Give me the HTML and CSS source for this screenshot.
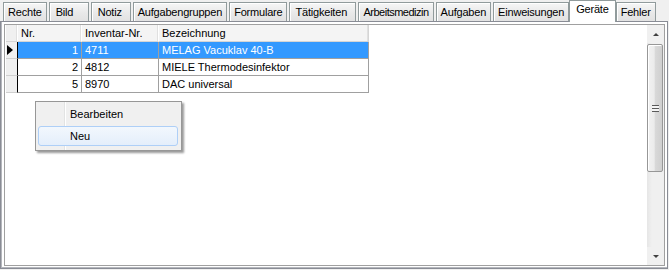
FILE: index.html
```html
<!doctype html>
<html lang="de">

<head>
  <meta charset="utf-8">
  <title>Geräte</title>
  <link rel="stylesheet" href="styles.css">
</head>

<body>

  <div class="tabs">
    <div class="tab">Rechte</div>
    <div class="tab tab_wide">Bild</div>
    <div class="tab tab_wide">Notiz</div>
    <div class="tab">Aufgabengruppen</div>
    <div class="tab">Formulare</div>
    <div class="tab tab_roomy">Tätigkeiten</div>
    <div class="tab tab_tight">Arbeitsmedizin</div>
    <div class="tab">Aufgaben</div>
    <div class="tab">Einweisungen</div>
    <div class="tab tab_active">Geräte</div>
    <div class="tab">Fehler</div>
  </div>

  <div class="panel">
    <div class="grid">
      <div class="grid__body">
        <div class="table">
          <div class="cell cell_head cell_corner"></div>
          <div class="cell cell_head">Nr.</div>
          <div class="cell cell_head">Inventar-Nr.</div>
          <div class="cell cell_head">Bezeichnung</div>

          <div class="cell cell_rowhead"><span class="marker"></span></div>
          <div class="cell cell_num cell_selected">1</div>
          <div class="cell cell_selected">4711</div>
          <div class="cell cell_selected">MELAG Vacuklav 40-B</div>

          <div class="cell cell_rowhead"></div>
          <div class="cell cell_num">2</div>
          <div class="cell">4812</div>
          <div class="cell">MIELE Thermodesinfektor</div>

          <div class="cell cell_rowhead"></div>
          <div class="cell cell_num">5</div>
          <div class="cell">8970</div>
          <div class="cell">DAC universal</div>
        </div>
      </div>
      <div class="scrollbar">
        <div class="scrollbar__btn"><span class="arrow arrow_up"></span></div>
        <div class="scrollbar__thumb"><span class="grip"></span></div>
        <div class="scrollbar__track"></div>
        <div class="scrollbar__btn"><span class="arrow arrow_down"></span></div>
      </div>
    </div>
  </div>

  <div class="menu">
    <div class="menu__item">Bearbeiten</div>
    <div class="menu__item menu__item_hover">Neu</div>
  </div>

</body>

</html>
```

FILE: styles.css
```css
body {
  margin: 0;
  width: 669px;
  height: 270px;
  overflow: hidden;
  position: relative;
  font-family: "Liberation Sans", Arial, sans-serif;
  font-size: 11px;
  color: #000;
  background-color: #f0f0f0;
}

*,
*::before,
*::after {
  box-sizing: border-box;
}

/* tabs */

.tabs {
  display: flex;
  align-items: flex-end;
  height: 21px;
  padding-left: 3px;
  position: relative;
  z-index: 1;
}

.tab {
  height: 19px;
  padding: 0 4px;
  margin-right: 2px;
  line-height: 18px;
  letter-spacing: -0.2px;
  white-space: nowrap;
  border: 1px solid #919b9c;
  border-bottom: 0;
  background: linear-gradient(#f6f6f6, #e8e8e8 60%, #e2e2e2);
  box-shadow: inset 1px 1px 0 #fff;
}

.tab_wide {
  min-width: 40px;
  padding-left: 6px;
}

.tab_roomy {
  min-width: 67px;
  padding-left: 5px;
}

.tab_tight {
  letter-spacing: -0.5px;
}

.tab_active {
  height: 22px;
  margin: 0 0 -1px -2px;
  padding: 0 6px;
  line-height: 16px;
  background: #fff;
  box-shadow: none;
}

/* panel */

.panel {
  width: 668px;
  height: 248px;
  padding: 2px 2px 2px 3px;
  border: 1px solid #898c95;
  background-color: #fff;
  box-shadow: inset 1px 0 0 #b4b6bc, inset 0 -1px 0 #b4b6bc;
}

.grid {
  display: flex;
  height: 100%;
  border: 1px solid #a0a0a0;
  background-color: #fff;
}

.grid__body {
  flex: 1;
  padding-left: 1px;
}

.table {
  display: grid;
  grid-template-columns: 12px 64px 77px 210px;
  grid-auto-rows: 17px;
  width: max-content;
}

.cell {
  padding: 0 3px;
  line-height: 16px;
  white-space: nowrap;
  overflow: hidden;
  border-right: 1px solid #a0a0a0;
  border-bottom: 1px solid #a0a0a0;
}

.cell_head {
  background-color: #f4f4f4;
  border-right-color: #fff;
  border-bottom-color: #d5d5d5;
  box-shadow: inset -1px 0 0 #e0e0e0;
}

.table .cell_head:nth-child(4) {
  border-right-color: #d5d5d5;
}

.cell_corner {
  background-color: #f0f0f0;
}

.cell_num {
  text-align: right;
}

.cell_rowhead {
  display: flex;
  align-items: center;
  padding: 0 0 0 1px;
  background-color: #f0f0f0;
  border-right-color: #000;
  border-bottom-color: #d0d0d0;
}

.cell_selected {
  color: #fff;
  background-color: #3399ff;
}

.marker {
  width: 0;
  height: 0;
  border-left: 6px solid #000;
  border-top: 5px solid transparent;
  border-bottom: 5px solid transparent;
}

/* scrollbar */

.scrollbar {
  display: flex;
  flex-direction: column;
  width: 17px;
  background: linear-gradient(to right, #e6e6e6, #f0f0f0 30%, #f0f0f0);
}

.scrollbar__btn {
  display: flex;
  align-items: center;
  justify-content: center;
  height: 18px;
  background-color: #f0f0f0;
}

.arrow {
  width: 0;
  height: 0;
  border-left: 3px solid transparent;
  border-right: 3px solid transparent;
}

.arrow_up {
  border-bottom: 3px solid #404040;
}

.arrow_down {
  border-top: 3px solid #404040;
}

.scrollbar__thumb {
  display: flex;
  align-items: center;
  justify-content: center;
  height: 128px;
  margin: 1px 1px 0 0;
  border: 1px solid #979797;
  border-radius: 2px;
  background: linear-gradient(to right, #f2f2f2, #ebebeb 45%, #d9d9d9 50%, #cfcfcf);
  box-shadow: inset 1px 1px 0 #fff;
}

.grip {
  width: 7px;
  height: 7px;
  background: repeating-linear-gradient(#5a5a5a 0, #5a5a5a 1px, #f4f4f4 1px, #f4f4f4 3px);
}

.scrollbar__track {
  flex: 1;
}

/* context menu */

.menu {
  position: absolute;
  left: 35px;
  top: 101px;
  width: 147px;
  padding: 2px 3px 4px 2px;
  border: 1px solid #979797;
  background-color: #f0f0f0;
  box-shadow: 2px 2px 2px rgba(0, 0, 0, 0.4);
}

.menu::before {
  content: "";
  position: absolute;
  top: 0;
  bottom: 0;
  left: 28px;
  width: 2px;
  border-left: 1px solid #e2e3e3;
  border-right: 1px solid #fff;
}

.menu__item {
  position: relative;
  height: 20px;
  line-height: 18px;
  padding-left: 31px;
  border: 1px solid transparent;
  border-radius: 3px;
}

.menu__item + .menu__item {
  margin-top: 2px;
}

.menu__item_hover {
  border-color: #aecff7;
  background: linear-gradient(#f2f7fd, #e4eefb);
}
```
